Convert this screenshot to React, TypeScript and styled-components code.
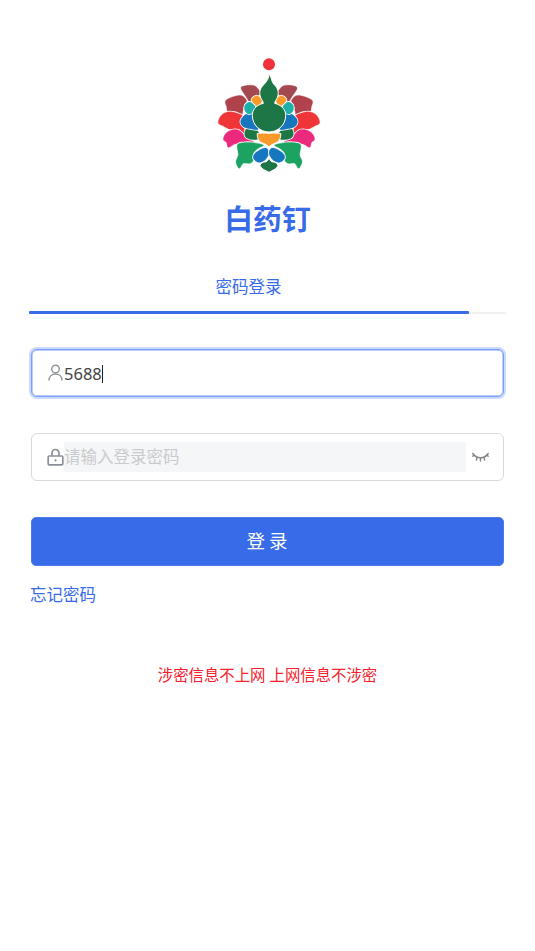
import React from "react";
import styled, { createGlobalStyle } from "styled-components";

const Global = createGlobalStyle`
  html, body { margin: 0; padding: 0; background: #fff; }
  body { font-family: "Noto Sans", "Noto Sans CJK SC", sans-serif; }
  * { box-sizing: border-box; }
`;

const Page = styled.main`
  width: 535px;
  height: 951px;
  padding: 50px 29px 0;
  display: flex;
  flex-direction: column;
  align-items: stretch;
  overflow: hidden;
`;
const LogoWrap = styled.div`
  display: flex;
  justify-content: center;
  height: 130px;
`;
const Title = styled.h1`
  margin: 18px 0 0;
  height: 42px;
  line-height: 42px;
  font-size: 28.8px;
  font-weight: 700;
  color: #376be8;
  text-align: center;
`;
const Tabs = styled.div`
  margin-top: 27px;
  height: 47px;
  border-bottom: 2px solid #f0f0f0;
  display: flex;
  position: relative;
`;
const Tab = styled.div`
  flex: 0 0 439px;
  height: 45px;
  line-height: 40px;
  text-align: center;
  font-size: 16.5px;
  color: #376be8;
`;
const TabLine = styled.div`
  position: absolute;
  left: 0;
  bottom: -2px;
  width: 440px;
  height: 3px;
  background: #376be8;
  border-radius: 1px;
`;
const Form = styled.div`
  padding: 0 2px;
  display: flex;
  flex-direction: column;
`;
const Field = styled.div<{ $focused?: boolean; $top: number }>`
  margin-top: ${(p) => p.$top}px;
  height: 48px;
  border-radius: 6px;
  background: #fff;
  border: 1px solid ${(p) => (p.$focused ? "#7c9ef6" : "#d9d9d9")};
  box-shadow: ${(p) => (p.$focused ? "0 0 0 2px #cbd9fc, inset 0 0 0 0.5px #7c9ef6" : "none")};
  display: flex;
  align-items: center;
  padding: 0 14px;
`;
const FieldIcon = styled.span`
  flex: 0 0 18px;
  height: 18px;
  display: flex;
  align-items: center;
  justify-content: center;
`;
const Value = styled.div`
  font-size: 16.5px;
  color: #444;
  line-height: 30px;
  padding-top: 1px;
  display: flex;
  align-items: center;
`;
const Caret = styled.span`
  width: 1px;
  height: 18px;
  background: #222;
`;
const Placeholder = styled.div`
  flex: 1;
  height: 30px;
  line-height: 30px;
  background: #f5f6f7;
  border-radius: 2px;
  color: #c9cbce;
  font-size: 16.5px;
`;
const EyeWrap = styled.span`
  flex: 0 0 17px;
  margin-left: 6px;
  display: flex;
  align-items: center;
`;
const Submit = styled.button`
  margin-top: 36px;
  height: 49px;
  border: 1px solid #4d79ea;
  border-radius: 5px;
  background: #376be8;
  color: #fff;
  font-family: inherit;
  font-size: 18.5px;
  line-height: 24px;
  letter-spacing: 4px;
  padding: 0 0 1px 3px;
`;
const Forgot = styled.a`
  margin: 17px 0 0 -1px;
  height: 24px;
  line-height: 24px;
  font-size: 16.5px;
  color: #376be8;
`;
const Notice = styled.p`
  margin: 57px 0 0;
  text-align: center;
  font-size: 15.4px;
  line-height: 24px;
  color: #f5222d;
`;

type Pt = [number, number];

/* closed Catmull-Rom curve through the outline points of a petal */
const smooth = (pts: Pt[]) => {
  const n = pts.length;
  let d = `M${pts[0][0]} ${pts[0][1]}`;
  for (let i = 0; i < n; i++) {
    const p0 = pts[(i - 1 + n) % n];
    const p1 = pts[i];
    const p2 = pts[(i + 1) % n];
    const p3 = pts[(i + 2) % n];
    const c1x = p1[0] + (p2[0] - p0[0]) / 6;
    const c1y = p1[1] + (p2[1] - p0[1]) / 6;
    const c2x = p2[0] - (p3[0] - p1[0]) / 6;
    const c2y = p2[1] - (p3[1] - p1[1]) / 6;
    d += `C${c1x} ${c1y} ${c2x} ${c2y} ${p2[0]} ${p2[1]}`;
  }
  return d + "Z";
};

const petals: { fill: string; pts: Pt[] }[] = [
  { fill: "#A34A50", pts: [[123, 113], [145, 106], [165, 108], [180, 125], [178, 135], [160, 145], [150, 156], [135, 135]] },
  { fill: "#AF434B", pts: [[77, 152], [100, 140], [125, 137], [140, 152], [135, 162], [128, 185], [125, 195], [105, 186], [85, 188], [80, 170]] },
  { fill: "#F03539", pts: [[55, 218], [65, 195], [90, 185], [125, 195], [128, 205], [125, 215], [135, 245], [125, 250], [110, 240], [90, 238], [70, 228]] },
  { fill: "#EC2A7D", pts: [[70, 268], [78, 250], [95, 240], [115, 240], [130, 252], [140, 265], [160, 275], [125, 282], [105, 282], [85, 292], [80, 278]] },
  { fill: "#1BA362", pts: [[112, 285], [130, 278], [160, 278], [190, 285], [175, 295], [160, 310], [160, 330], [150, 340], [130, 340], [118, 355], [108, 335], [115, 315]] },
  { fill: "#1877BE", pts: [[165, 310], [185, 297], [200, 295], [207, 310], [195, 330], [175, 337], [160, 325]] },
  { fill: "#1C7645", pts: [[138, 238], [160, 235], [178, 250], [175, 267], [150, 268], [135, 258]] },
  { fill: "#1877BE", pts: [[125, 205], [140, 192], [158, 193], [160, 215], [175, 238], [150, 236], [130, 230], [122, 218]] },
  { fill: "#1DB0A8", pts: [[135, 165], [150, 156], [165, 168], [160, 185], [147, 192], [135, 182]] },
  { fill: "#F79A2C", pts: [[155, 150], [170, 137], [186, 150], [173, 168]] },
];

const Petal = ({ fill, d }: { fill: string; d: string }) => (
  <>
    <path d={d} fill="#fff" stroke="#fff" strokeWidth={6} strokeLinejoin="round" />
    <path d={d} fill={fill} stroke={fill} strokeWidth={1} strokeLinejoin="round" />
  </>
);

const Half = () => (
  <>
    {petals.map((p, i) => (
      <Petal key={i} fill={p.fill} d={smooth(p.pts)} />
    ))}
  </>
);

const Logo = () => (
  <svg width="135" height="130" viewBox="0 0 405 390" aria-label="logo">
    <defs>
      <filter id="soft" x="-5%" y="-5%" width="110%" height="110%">
        <feGaussianBlur stdDeviation="1.200" />
      </filter>
    </defs>
    <g filter="url(#soft)">
      <circle cx="207" cy="43" r="18" fill="#F0323C" />
      <Half />
      <g transform="translate(414,0) scale(-1,1)">
        <Half />
      </g>
      <g stroke="#fff" strokeWidth="3">
        <path fill="#1C7645" d="M207 367c-10-6-24-10-27-21 2-6 8-10 14-10 6 0 10-4 13-12 3 8 7 12 13 12 6 0 12 4 14 10-3 11-17 15-27 21z" />
        <path fill="#F79A2C" d="M172 250c10 0 20-2 35 0 15-2 25 0 35 0 2 14-6 28-18 30-6 2-11 6-17 10-6-4-11-8-17-10-12-2-20-16-18-30z" />
        <path fill="#1C7645" d="M207 72c8 8 6 20 14 30 8 8 16 18 13 34-2 12-9 16-10 24 26 6 33 24 33 36 0 30-24 50-50 50s-50-20-50-50c0-14 8-30 33-36-1-8-8-12-10-24-3-16 5-26 13-34 8-8 14-18 14-30z" />
      </g>
    </g>
  </svg>
);

const UserIcon = () => (
  <svg width="15" height="18" viewBox="0 0 15 18" fill="none" stroke="#8f949c" strokeWidth="1.400">
    <circle cx="7.500" cy="5" r="3.800" />
    <path d="M1 16.500c0-4 2.800-6.500 6.500-6.500s6.500 2.500 6.500 6.500" />
  </svg>
);
const LockIcon = () => (
  <svg width="17" height="18" viewBox="0 0 17 18" fill="none" stroke="#8a8f98" strokeWidth="1.700">
    <rect x="1.200" y="8" width="14.600" height="8.800" rx="1" />
    <path d="M5 7.800V5a3.500 3.500 0 0 1 7 0v2.800" />
    <circle cx="8.500" cy="12.400" r="1.100" fill="#8a8f98" stroke="none" />
  </svg>
);
const EyeIcon = () => (
  <svg width="17" height="11" viewBox="0 0 17 11" fill="none" stroke="#858585" strokeWidth="1.400" strokeLinecap="round">
    <path d="M0.800 1.500c2 3 4.700 4.200 7.700 4.200s5.700-1.200 7.700-4.200" />
    <path d="M0.800 4.200l2-1M16.200 4.200l-2-1M5 5.400l-.6 2.600M12 5.400l.6 2.600M8.500 6v3" />
  </svg>
);

export default function App() {
  return (
    <>
      <Global />
      <Page>
        <LogoWrap>
          <Logo />
        </LogoWrap>
        <Title>白药钉</Title>
        <Tabs>
          <Tab>密码登录</Tab>
          <TabLine />
        </Tabs>
        <Form>
          <Field $focused $top={35}>
            <FieldIcon>
              <UserIcon />
            </FieldIcon>
            <Value>
              5688
              <Caret />
            </Value>
          </Field>
          <Field $top={36}>
            <FieldIcon>
              <LockIcon />
            </FieldIcon>
            <Placeholder>请输入登录密码</Placeholder>
            <EyeWrap>
              <EyeIcon />
            </EyeWrap>
          </Field>
          <Submit>登录</Submit>
          <Forgot>忘记密码</Forgot>
          <Notice>涉密信息不上网 上网信息不涉密</Notice>
        </Form>
      </Page>
    </>
  );
}
